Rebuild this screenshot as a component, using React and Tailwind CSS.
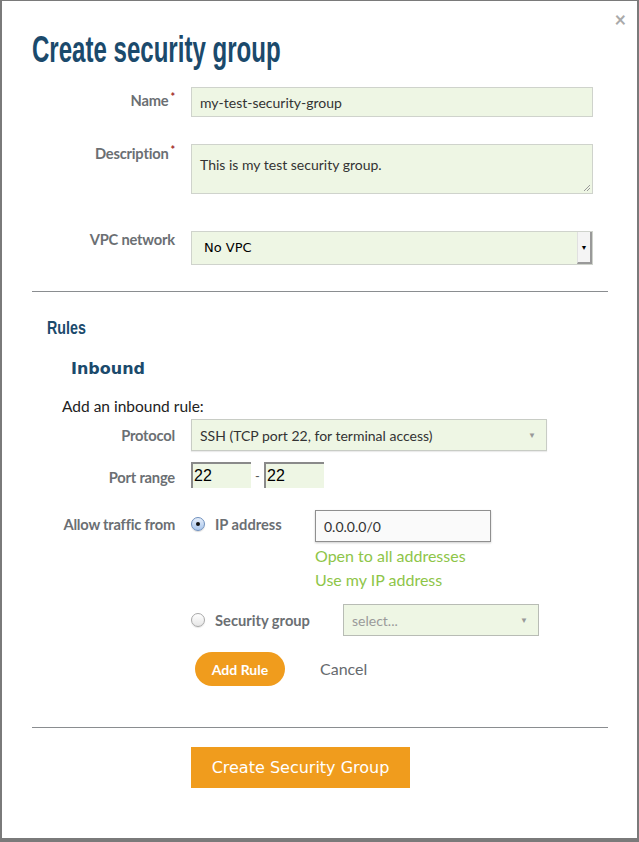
import React from 'react';

const lato = { fontFamily: 'Lato, "Open Sans", sans-serif' };
const narrow = { fontFamily: '"Liberation Sans", Arial, sans-serif' };

const Label = ({ children, required, className = '' }) => (
  <div className={`text-right text-[14.7px] font-bold text-[#6b6f73] tracking-[-0.2px] ${className}`}>
    {children}
    {required && <sup className="text-[#a11f1f] text-[11px] ml-[2px] top-[-5px]">*</sup>}
  </div>
);

const Arrow = () => (
  <span className="text-[#999] text-[8px] leading-none">▼</span>
);

const Radio = ({ checked }) =>
  checked ? (
    <span className="w-[14px] h-[14px] rounded-full border border-[#6e8fbd] bg-gradient-to-b from-[#e6eefa] to-[#a9c6ec] flex items-center justify-center shadow-[0_1px_1px_rgba(0,0,0,0.15)]">
      <span className="w-[4px] h-[4px] rounded-full bg-[#111]" />
    </span>
  ) : (
    <span className="w-[14px] h-[14px] rounded-full border border-[#a8a8a8] bg-gradient-to-b from-white to-[#e6e6e6] shadow-[0_1px_1px_rgba(0,0,0,0.1)]" />
  );

export default function App() {
  return (
    <div className="w-[639px] h-[842px] bg-[#7a7a7a] pt-[1px] pl-[2px]" style={lato}>
      <div className="relative w-[635px] h-[837px] bg-white pl-[30px] pr-[29px]">
        <button className="absolute right-[11px] top-[8px] text-[#aaa] text-[20px] font-bold leading-none">×</button>

        <h1 className="pt-[28px] h-[70px] text-[37px] leading-[42px] font-bold text-[#1b4a6c] whitespace-nowrap" style={narrow}>
          <span className="inline-block origin-left scale-x-[0.65]">Create security group</span>
        </h1>

        <div className="mt-[16px] grid grid-cols-[143px_402px] gap-x-[16px]">
          <Label required className="pt-[2px]">Name</Label>
          <input
            readOnly
            value="my-test-security-group"
            className="h-[30px] border border-[#cfd3cc] bg-[#eef6e4] px-[8px] text-[14px] text-[#333] outline-none"
          />

          <Label required className="mt-[25px]">Description</Label>
          <div className="relative mt-[27px] h-[50px] border border-[#cfd3cc] bg-[#eef6e4] px-[8px] pt-[9px] text-[14px] text-[#333]">
            This is my test security group.
            <svg className="absolute right-[1px] bottom-[1px]" width="9" height="9" viewBox="0 0 9 9">
              <path d="M8 2L2 8M8 5L5 8" stroke="#999" strokeWidth="1" />
            </svg>
          </div>

          <Label className="mt-[34px]">VPC network</Label>
          <div className="mt-[37px] h-[34px] border border-[#cfd3cc] bg-[#eef6e4] flex items-center">
            <span className="flex-1 pl-[12px] text-black" style={{ fontFamily: '"DejaVu Sans", sans-serif', fontSize: '13px' }}>
              No VPC
            </span>
            <span className="w-[15px] h-[32px] bg-[#f4f4f4] border-l border-[#e0e0e0] border-r-2 border-r-[#999] border-b-2 border-b-[#999] flex items-center justify-center text-[7px] text-black">
              ▼
            </span>
          </div>
        </div>

        <div className="mt-[26px] h-px bg-[#8a8d90]" />

        <h2 className="ml-[15px] mt-[25px] h-[22px] text-[19px] leading-[22px] font-bold text-[#1b4a6c] whitespace-nowrap" style={narrow}>
          <span className="inline-block origin-left scale-x-[0.75]">Rules</span>
        </h2>

        <h3
          className="ml-[39px] mt-[21px] text-[16px] leading-[18px] font-bold text-[#1b4a6c]"
          style={{ fontFamily: '"DejaVu Sans", Verdana, sans-serif' }}
        >
          Inbound
        </h3>

        <div className="ml-[30px] mt-[17px] text-[15.5px] text-[#222]">Add an inbound rule:</div>

        <div className="mt-[1px] grid grid-cols-[143px_1fr] gap-x-[16px]">
          <Label className="pt-[5px]">Protocol</Label>
          <div className="w-[356px] h-[32px] border border-[#c8ccc5] bg-[#eef6e4] flex items-center justify-between pl-[8px] pr-[10px] shadow-[0_1px_1px_rgba(0,0,0,0.08)]">
            <span className="text-[14px] text-[#333]">SSH (TCP port 22, for terminal access)</span>
            <Arrow />
          </div>

          <Label className="pt-[4px] mt-[11px]">Port range</Label>
          <div className="mt-[11px] flex items-center text-[16px] text-black" style={{ fontFamily: '"Liberation Sans", Arial, sans-serif' }}>
            <span className="w-[60px] h-[26px] bg-[#eef6e4] border-t-2 border-l-2 border-t-[#8a8a8a] border-l-[#8a8a8a] flex items-center pl-[1px]">22</span>
            <span className="w-[13px] text-center text-[13px] text-[#555]">-</span>
            <span className="w-[60px] h-[26px] bg-[#eef6e4] border-t-2 border-l-2 border-t-[#8a8a8a] border-l-[#8a8a8a] flex items-center pl-[1px]">22</span>
          </div>

          <Label className="pt-[3px] mt-[22px]">Allow traffic from</Label>
          <div className="mt-[22px]">
            <div className="flex items-start">
              <div className="w-[124px] flex items-center gap-[10px] pt-[3px]">
                <Radio checked />
                <span className="text-[14.7px] font-bold text-[#6b6f73]">IP address</span>
              </div>
              <div>
                <div className="w-[176px] h-[32px] border border-[#8f8f8f] bg-[#fafafa] flex items-center pl-[8px] text-[14px] text-[#333] shadow-[0_1px_2px_rgba(0,0,0,0.2)]">
                  0.0.0.0/0
                </div>
                <div className="mt-[2px] text-[16px] leading-[24px] text-[#8ec548]">Open to all addresses</div>
                <div className="text-[16px] leading-[24px] text-[#8ec548]">Use my IP address</div>
              </div>
            </div>

            <div className="mt-[12px] flex items-center">
              <div className="w-[152px] flex items-center gap-[10px]">
                <Radio />
                <span className="text-[14.7px] font-bold text-[#6b6f73]">Security group</span>
              </div>
              <div className="w-[196px] h-[32px] border border-[#b8bcb5] bg-[#eef6e4] flex items-center justify-between pl-[8px] pr-[10px]">
                <span className="text-[14px] text-[#9a9a9a]">select...</span>
                <Arrow />
              </div>
            </div>

            <div className="mt-[16px] ml-[4px] flex items-center">
              <button className="w-[90px] h-[34px] rounded-full bg-[#f09c1d] text-white text-[14px] font-bold">
                Add Rule
              </button>
              <span className="ml-[35px] text-[16px] text-[#666a6e]">Cancel</span>
            </div>
          </div>
        </div>

        <div className="mt-[41px] h-px bg-[#8a8d90]" />

        <div className="mt-[19px] ml-[159px]">
          <button
            className="w-[219px] h-[41px] bg-[#f09c1d] text-white text-[16px]"
            style={{ fontFamily: '"DejaVu Sans", Verdana, sans-serif' }}
          >
            Create Security Group
          </button>
        </div>
      </div>
    </div>
  );
}
